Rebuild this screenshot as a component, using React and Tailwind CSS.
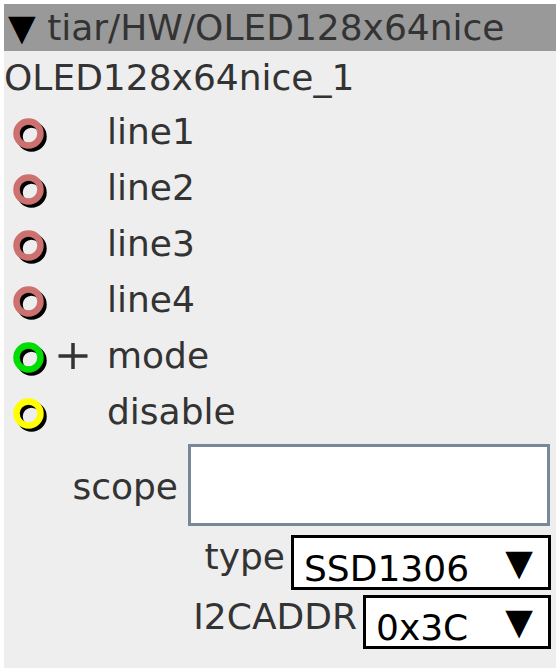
import React from "react";

function Ring({ color }) {
  return (
    <svg width="40" height="40" viewBox="0 0 40 40" className="shrink-0">
      <circle cx="19.5" cy="24.5" r="12" fill="none" stroke="#000" strokeWidth="6.5" />
      <circle cx="16.5" cy="21.5" r="12" fill="none" stroke={color} strokeWidth="6.5" />
    </svg>
  );
}

function Plus() {
  return (
    <svg width="30" height="26" viewBox="0 0 30 26" className="ml-[6px]">
      <line x1="0.5" y1="13" x2="29.5" y2="13" stroke="#333" strokeWidth="3.5" />
      <line x1="15" y1="0" x2="15" y2="26" stroke="#333" strokeWidth="3.5" />
    </svg>
  );
}

function Row({ color, label, plus }) {
  return (
    <div className="flex items-center h-[56px] pl-[8px]">
      <Ring color={color} />
      <div className="w-[55px] flex items-center">{plus ? <Plus /> : null}</div>
      <span>{label}</span>
    </div>
  );
}

export default function App() {
  return (
    <div
      className="w-[560px] h-[672px] bg-white p-[4px] text-[36px] text-[#333333] leading-[1.164]"
      style={{ fontFamily: '"DejaVu Sans", sans-serif' }}
    >
      <div className="h-full bg-[#eeeeee] flex flex-col">
        <div className="h-[47px] bg-[#999999] flex items-center pl-[4px] whitespace-pre">
          <span className="text-black">▼ </span>
          <span>tiar/HW/OLED128x64nice</span>
        </div>
        <div className="h-[53px] flex items-center">OLED128x64nice_1</div>
        <Row color="#cc7070" label="line1" />
        <Row color="#cc7070" label="line2" />
        <Row color="#cc7070" label="line3" />
        <Row color="#cc7070" label="line4" />
        <Row color="#00dd00" label="mode" plus />
        <Row color="#ffff00" label="disable" />
        <div className="flex justify-end items-center pr-[6px] mt-[4px] gap-[10px]">
          <span className="mt-[4px]">scope</span>
          <div className="w-[362px] h-[82px] bg-white border-[3px] border-[#778899]" />
        </div>
        <div className="flex justify-end items-start pr-[5px] mt-[9px] gap-[6px]">
          <span className="mt-[1px]">type</span>
          <div className="w-[260px] h-[55px] bg-white border-[3px] border-black flex items-end justify-between pl-[10px] pr-[15px] text-black leading-[36px]">
            <span>SSD1306</span>
            <span className="self-center">▼</span>
          </div>
        </div>
        <div className="flex justify-end items-start pr-[5px] mt-[5px] gap-[6px]">
          <span className="mt-[1px]">I2CADDR</span>
          <div className="w-[188px] h-[54px] bg-white border-[3px] border-black flex items-end justify-between pl-[10px] pr-[15px] text-black leading-[36px]">
            <span>0x3C</span>
            <span className="self-center">▼</span>
          </div>
        </div>
      </div>
    </div>
  );
}
